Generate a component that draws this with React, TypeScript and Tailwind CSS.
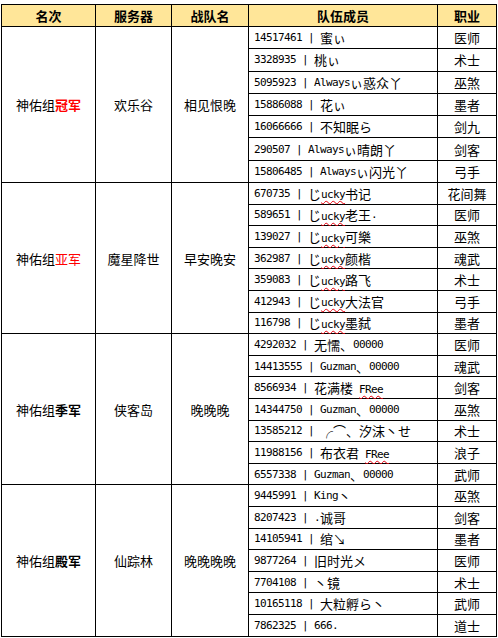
import React from "react";

type Member = { m: string; job: string };
type Group = { rank: React.ReactNode; server: string; team: string; members: Member[] };

// "~" marks a span that Word flagged with a red squiggle
function Txt({ s }: { s: string }) {
  const parts = s.split("~");
  return (
    <>
      {parts.map((p, i) => {
        const runs = p.split(/([\x20-\x7e]+)/).filter(Boolean);
        const inner = runs.map((r, j) =>
          /^[\x20-\x7e]+$/.test(r) ? (
            <span key={j} className="font-['DejaVu_Sans_Mono',monospace] text-[11px] tracking-[-0.62px]">
              {r}
            </span>
          ) : (
            <span key={j}>{r}</span>
          )
        );
        return i % 2 === 1 ? (
          <span key={i} className="underline decoration-wavy decoration-red-600 decoration-1 underline-offset-2">
            {inner}
          </span>
        ) : (
          <React.Fragment key={i}>{inner}</React.Fragment>
        );
      })}
    </>
  );
}

const groups: Group[] = [
  {
    rank: <span className="font-bold text-[#ff0000]">冠军</span>,
    server: "欢乐谷",
    team: "相见恨晚",
    members: [
      { m: "14517461 | 蜜ぃ", job: "医师" },
      { m: "3328935 | 桃ぃ", job: "术士" },
      { m: "5095923 | Alwaysぃ惑众丫", job: "巫煞" },
      { m: "15886088 | 花ぃ", job: "墨者" },
      { m: "16066666 | 不知眠ら", job: "剑九" },
      { m: "290507 | Alwaysぃ晴朗丫", job: "剑客" },
      { m: "15806485 | Alwaysぃ闪光丫", job: "弓手" },
    ],
  },
  {
    rank: <span className="text-[#ff0000]">亚军</span>,
    server: "魔星降世",
    team: "早安晚安",
    members: [
      { m: "670735 | じ~ucky~书记", job: "花间舞" },
      { m: "589651 | じ~ucky~老王.", job: "医师" },
      { m: "139027 | じ~ucky~可樂", job: "巫煞" },
      { m: "362987 | じ~ucky~颜楷", job: "魂武" },
      { m: "359083 | じ~ucky~路飞", job: "术士" },
      { m: "412943 | じ~ucky~大法官", job: "弓手" },
      { m: "116798 | じ~ucky~墨弑", job: "墨者" },
    ],
  },
  {
    rank: <span className="font-bold">季军</span>,
    server: "侠客岛",
    team: "晚晚晚",
    members: [
      { m: "4292032 | 无懦、00000", job: "医师" },
      { m: "14413555 | Guzman、00000", job: "魂武" },
      { m: "8566934 | 花满楼 ~FRee~", job: "剑客" },
      { m: "14344750 | Guzman、00000", job: "巫煞" },
      { m: "13585212 | ╭⌒、汐沫丶せ", job: "术士" },
      { m: "11988156 | 布衣君 ~FRee~", job: "浪子" },
      { m: "6557338 | Guzman、00000", job: "武师" },
    ],
  },
  {
    rank: <span className="font-bold">殿军</span>,
    server: "仙踪林",
    team: "晚晚晚晚",
    members: [
      { m: "9445991 | King丶", job: "巫煞" },
      { m: "8207423 | .诚哥", job: "剑客" },
      { m: "14105941 | 绾↘", job: "墨者" },
      { m: "9877264 | 旧时光メ", job: "医师" },
      { m: "7704108 | 丶镜", job: "术士" },
      { m: "10165118 | 大粒孵ら丶", job: "武师" },
      { m: "7862325 | 666.", job: "道士" },
    ],
  },
];

const head = ["名次", "服务器", "战队名", "队伍成员", "职业"];

export default function App() {
  return (
    <div className="min-h-screen bg-white pt-[4px] pl-px font-['Noto_Sans_CJK_SC',sans-serif] text-[13px] leading-none text-black">
      <div className="inline-grid grid-cols-[93px_75px_76px_188px_58px] grid-rows-[21px_repeat(7,21.3px)_repeat(21,20.6px)] gap-px bg-black p-px">
        {head.map((h) => (
          <div key={h} className="flex items-center justify-center bg-[#ffe699] font-bold">
            {h}
          </div>
        ))}
        {groups.map((g, gi) => (
          <React.Fragment key={gi}>
            <div className="row-span-7 flex items-center justify-center bg-white">
              神佑组{g.rank}
            </div>
            <div className="row-span-7 flex items-center justify-center bg-white">{g.server}</div>
            <div className="row-span-7 flex items-center justify-center bg-white">{g.team}</div>
            {g.members.map((mb, mi) => (
              <React.Fragment key={mi}>
                <div className="flex items-center whitespace-pre bg-white pl-[5px]">
                  <Txt s={mb.m} />
                </div>
                <div className="flex items-center justify-center bg-white">{mb.job}</div>
              </React.Fragment>
            ))}
          </React.Fragment>
        ))}
      </div>
    </div>
  );
}
